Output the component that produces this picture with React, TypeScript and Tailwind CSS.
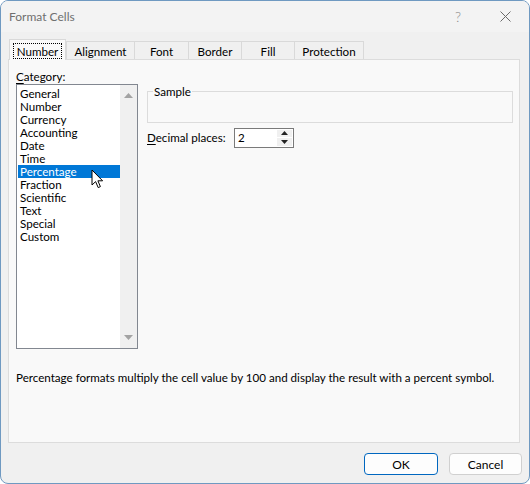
import React from "react";

const FONT = { fontFamily: 'Lato, "Noto Sans", "Liberation Sans", sans-serif' };

const categories = [
  "General",
  "Number",
  "Currency",
  "Accounting",
  "Date",
  "Time",
  "Percentage",
  "Fraction",
  "Scientific",
  "Text",
  "Special",
  "Custom",
];

const tabs = [
  { label: "Number", w: "w-[57px]" },
  { label: "Alignment", w: "w-[69px]" },
  { label: "Font", w: "w-[55px] -ml-px" },
  { label: "Border", w: "w-[54px] -ml-px" },
  { label: "Fill", w: "w-[54px] -ml-px" },
  { label: "Protection", w: "w-[70px] -ml-px" },
];

function Cursor() {
  return (
    <svg
      className="absolute left-[74px] top-[4px]"
      width="14"
      height="21"
      viewBox="0 0 14 21"
    >
      <path
        d="M1 1 L1 16 L4.6 12.6 L7.2 18.6 L9.4 17.6 L6.9 11.8 L11.6 11.8 Z"
        fill="white"
        stroke="black"
        strokeWidth="1"
        strokeLinejoin="miter"
      />
    </svg>
  );
}

export default function App() {
  return (
    <div className="w-[530px] h-[484px] bg-white text-[11.6px] leading-[13px] text-black whitespace-nowrap" style={FONT}>
      <div className="w-full h-full border border-[#6f99c1] rounded-[8px] overflow-hidden bg-[#f0f0f0] flex flex-col">
        {/* Title bar */}
        <div className="h-[31px] bg-[#f3f3f3] flex items-center pl-[8px] shrink-0">
          <span className="text-[#6f6f6f] text-[12px]">Format Cells</span>
          <div className="flex-1" />
          <span className="text-[#8a8a8a] text-[14px] font-light mr-[39px]">?</span>
          <svg width="11" height="11" viewBox="0 0 11 11" className="mr-[18px]">
            <path d="M0.5 0.5 L10.5 10.5 M10.5 0.5 L0.5 10.5" stroke="#6a6a6a" strokeWidth="1" />
          </svg>
        </div>

        {/* Body */}
        <div className="pl-[7px] pr-[9px] pt-[7px] flex flex-col shrink-0">
          {/* Tabs */}
          <div className="flex items-end h-[21px] pl-[1px] relative z-10">
            {tabs.map((t, i) =>
              i === 0 ? (
                <div
                  key={t.label}
                  className={`${t.w} h-[21px] bg-[#f9f9f9] border border-b-0 border-[#d9d9d9] flex items-start justify-center pt-[3px]`}
                >
                  <span className="border border-dotted border-black px-[3px] h-[16px] flex items-center">
                    {t.label}
                  </span>
                </div>
              ) : (
                <div
                  key={t.label}
                  className={`${t.w} h-[18px] bg-[#f0f0f0] border border-b-0 border-[#d9d9d9] flex items-center justify-center mb-px pt-[1px]`}
                >
                  {t.label}
                </div>
              )
            )}
          </div>

          {/* Panel */}
          <div className="h-[384px] -mt-px bg-[#f9f9f9] border border-[#dcdcdc] flex flex-col pl-[7px] pr-[6px]">
            <div className="flex pt-[9px]">
              {/* Category column */}
              <div className="flex flex-col w-[122px]">
                <div className="h-[14px] flex items-center">
                  <span>
                    <span className="underline underline-offset-[2px]">C</span>ategory:
                  </span>
                </div>
                <div className="mt-[1px] h-[265px] border border-[#828790] bg-white flex">
                  <div className="flex-1 pt-[2px] pl-[1px] relative">
                    {categories.map((c) => (
                      <div
                        key={c}
                        className={`h-[13px] flex items-center pl-[2px] ${
                          c === "Percentage" ? "bg-[#0078d7] text-white" : ""
                        }`}
                      >
                        {c}
                      </div>
                    ))}
                    <div className="absolute left-0 top-[80px]">
                      <div className="relative">
                        <Cursor />
                      </div>
                    </div>
                  </div>
                  <div className="w-[17px] bg-[#f0f0f0] flex flex-col items-center justify-between py-[8px]">
                    <svg width="9" height="5" viewBox="0 0 9 5">
                      <path d="M0 5 L4.5 0 L9 5 Z" fill="#a3a3a3" />
                    </svg>
                    <svg width="9" height="5" viewBox="0 0 9 5">
                      <path d="M0 0 L4.5 5 L9 0 Z" fill="#a3a3a3" />
                    </svg>
                  </div>
                </div>
              </div>

              {/* Right column */}
              <div className="flex-1 ml-[9px] flex flex-col">
                <div className="mt-[22px] h-[32px] border border-[#dcdcdc] relative">
                  <span className="absolute left-[5px] -top-[7px] bg-[#f9f9f9] px-px leading-[14px]">
                    Sample
                  </span>
                </div>
                <div className="mt-[4px] flex items-center h-[21px]">
                  <span className="w-[87px]">
                    <span className="underline underline-offset-[2px]">D</span>ecimal places:
                  </span>
                  <div className="w-[60px] h-[20px] border border-[#7a7a7a] bg-white flex">
                    <div className="flex-1 flex items-center pl-[3px]">2</div>
                    <div className="w-[17px] flex flex-col p-px gap-px">
                      <div className="flex-1 bg-[#f0f0f0] flex items-center justify-center">
                        <svg width="7" height="4" viewBox="0 0 7 4">
                          <path d="M0 4 L3.5 0 L7 4 Z" fill="#222" />
                        </svg>
                      </div>
                      <div className="flex-1 bg-[#f0f0f0] flex items-center justify-center">
                        <svg width="7" height="4" viewBox="0 0 7 4">
                          <path d="M0 0 L3.5 4 L7 0 Z" fill="#222" />
                        </svg>
                      </div>
                    </div>
                  </div>
                </div>
              </div>
            </div>

            <div className="mt-[21px] h-[14px] flex items-center">
              Percentage formats multiply the cell value by 100 and display the result with a percent symbol.
            </div>
          </div>
        </div>

        {/* Footer */}
        <div className="flex justify-end pr-[7px] pt-[10px] gap-[11px]">
          <button className="w-[74px] h-[22px] rounded-[4px] border border-[#0067c0] bg-[#fdfdfd] flex items-center justify-center text-[12px]">
            OK
          </button>
          <button className="w-[73px] h-[22px] rounded-[4px] border border-[#d0d0d0] bg-[#fdfdfd] flex items-center justify-center text-[12px]">
            Cancel
          </button>
        </div>
      </div>
    </div>
  );
}
